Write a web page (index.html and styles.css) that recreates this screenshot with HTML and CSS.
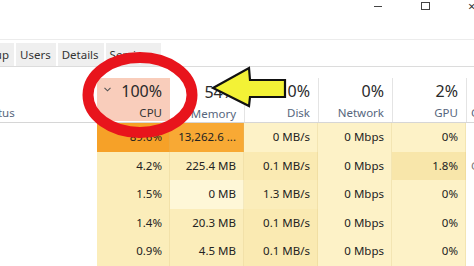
FILE: index.html
```html
<!DOCTYPE html>
<html>
<head>
  <meta charset="UTF-8"/>
  <title>Task Manager</title>
  <link rel="stylesheet" href="styles.css">
</head>
<body>
<div class="window">
  <div class="titlebar">
    <span class="ctl ctl-min"></span>
    <span class="ctl ctl-max"></span>
    <span class="ctl ctl-close">×</span>
  </div>

  <div class="tabs">
    <span class="tab tab-first">Startup</span>
    <span class="tab">Users</span>
    <span class="tab">Details</span>
    <span class="tab">Services</span>
  </div>

  <div class="table">
    <div class="head">
      <div class="hcell hcell-name"><span class="label status">Status</span></div>
      <div class="hcell sorted">
        <div class="hnum">
          <svg class="chev" width="7" height="5" viewBox="0 0 7 5"><polyline points="0.5,0.8 3.5,3.8 6.5,0.8" fill="none" stroke="#555" stroke-width="1.1"/></svg>
          <span>100%</span>
        </div>
        <span class="label">CPU</span>
      </div>
      <div class="hcell">
        <div class="hnum"><span>54%</span></div>
        <span class="label">Memory</span>
      </div>
      <div class="hcell sep">
        <div class="hnum"><span>0%</span></div>
        <span class="label">Disk</span>
      </div>
      <div class="hcell sep">
        <div class="hnum"><span>0%</span></div>
        <span class="label">Network</span>
      </div>
      <div class="hcell sep">
        <div class="hnum"><span>2%</span></div>
        <span class="label">GPU</span>
      </div>
      <div class="hcell sep hcell-extra"><span class="label">GPU engine</span></div>
    </div>

    <div class="row">
      <div class="cell name"></div>
      <div class="cell hot">89.6%</div>
      <div class="cell hot2">13,262.6 ...</div>
      <div class="cell pale">0 MB/s</div>
      <div class="cell pale">0 Mbps</div>
      <div class="cell pale">0%</div>
      <div class="cell extra"></div>
    </div>
    <div class="row">
      <div class="cell name"></div>
      <div class="cell mid">4.2%</div>
      <div class="cell mid">225.4 MB</div>
      <div class="cell mid2">0.1 MB/s</div>
      <div class="cell pale">0 Mbps</div>
      <div class="cell warm">1.8%</div>
      <div class="cell extra">GPU 0 - 3D</div>
    </div>
    <div class="row">
      <div class="cell name"></div>
      <div class="cell mid">1.5%</div>
      <div class="cell light">0 MB</div>
      <div class="cell mid">1.3 MB/s</div>
      <div class="cell pale">0 Mbps</div>
      <div class="cell pale">0%</div>
      <div class="cell extra"></div>
    </div>
    <div class="row">
      <div class="cell name"></div>
      <div class="cell mid">1.4%</div>
      <div class="cell mid">20.3 MB</div>
      <div class="cell mid2">0.1 MB/s</div>
      <div class="cell pale">0 Mbps</div>
      <div class="cell pale">0%</div>
      <div class="cell extra"></div>
    </div>
    <div class="row">
      <div class="cell name"></div>
      <div class="cell mid">0.9%</div>
      <div class="cell mid">4.5 MB</div>
      <div class="cell mid2">0.1 MB/s</div>
      <div class="cell pale">0 Mbps</div>
      <div class="cell pale">0%</div>
      <div class="cell extra"></div>
    </div>
  </div>

  <!-- annotation drawn over the screenshot -->
  <svg class="annot" width="474" height="266" viewBox="0 0 474 266">
    <ellipse cx="140" cy="95" rx="52" ry="37.5" fill="none" stroke="#e8141c" stroke-width="11"/>
    <polygon points="213,88 249,68 250,80 285,80 285,97 250,97 249,106" fill="#f3f236" stroke="#111" stroke-width="2.2" stroke-linejoin="miter"/>
  </svg>
</div>
</body>
</html>
```

FILE: styles.css
```css
html, body {
  margin: 0;
  padding: 0;
  background: #fff;
}
body {
  width: 474px;
  height: 266px;
  overflow: hidden;
  font-family: "Noto Sans", "Liberation Sans", sans-serif;
  color: #222;
}
.window {
  position: relative;
  width: 474px;
  height: 266px;
  overflow: hidden;
}

/* title bar */
.titlebar {
  height: 40px;
  border-bottom: 1px solid #ececec;
  box-sizing: border-box;
  display: flex;
  justify-content: flex-end;
  align-items: flex-start;
}
.ctl {
  display: block;
  color: #333;
}
.ctl-min {
  width: 8px;
  height: 1px;
  background: #444;
  margin-top: 6px;
  margin-right: 39px;
}
.ctl-max {
  width: 7px;
  height: 6px;
  border: 1px solid #444;
  margin-top: 2px;
  margin-right: 38px;
}
.ctl-close {
  font-size: 13px;
  line-height: 12px;
  width: 6px;
  overflow: hidden;
}

/* tabs */
.tabs {
  margin-top: 3px;
  height: 23px;
  display: flex;
  gap: 2px;
  border-bottom: 1px solid #dcdcdc;
  font-size: 11.5px;
  line-height: 23px;
}
.tab {
  background: #efefef;
  color: #333;
  padding: 0 5px 0 4px;
  white-space: nowrap;
}
.tab-first {
  margin-left: -35px;
}
.tab:last-child {
  padding-right: 8px;
}

/* table header */
.head, .row {
  display: grid;
  grid-template-columns: 97px 73px 74px 74px 74px 74px 1fr;
}
.head {
  height: 55px;
  border-bottom: 1px solid #d6d6d6;
  align-items: end;
}
.hcell {
  height: 43px;
  box-sizing: border-box;
  padding: 3px 8px 0 7px;
  display: flex;
  flex-direction: column;
  align-items: flex-end;
  gap: 4px;
}
.hcell.sep {
  border-left: 1px solid #e4e4e4;
  height: 44px;
}
.hcell.sorted {
  background: #f9cdbb;
  margin-bottom: 1px;
}
.hnum {
  align-self: stretch;
  display: flex;
  justify-content: flex-end;
  align-items: flex-start;
  font-size: 16px;
  line-height: 20px;
  color: #2a2a2a;
}
.sorted .hnum {
  justify-content: space-between;
}
.chev {
  margin-top: 6px;
}
.label {
  font-size: 11.5px;
  line-height: 16px;
  color: #56667d;
}
.sorted .label {
  color: #333;
}
.hcell-name {
  align-items: flex-start;
  justify-content: flex-end;
  padding: 0 0 1px 0;
}
.status {
  margin-left: -19px;
}
.hcell-extra {
  align-items: flex-start;
  justify-content: flex-end;
  padding: 0 0 1px 4px;
  white-space: nowrap;
}

/* rows */
.row {
  height: 28.5px;
}
.cell {
  font-size: 11.5px;
  line-height: 28.5px;
  text-align: right;
  padding-right: 7px;
  white-space: nowrap;
  border-right: 1px solid rgba(214, 190, 120, 0.25);
}
.cell.name {
  background: #fff;
  border-right: 0;
}
.cell.extra {
  border-right: 0;
  text-align: left;
  padding: 0 0 0 5px;
  color: #777;
}
.hot { background: #f6a128; }
.hot2 { background: #f8a934; }
.mid { background: #fbedba; }
.mid2 { background: #faeab2; }
.pale { background: #fdf2c7; }
.light { background: #fef7d7; }
.warm { background: #f8e6aa; }

/* annotation */
.annot {
  position: absolute;
  left: 0;
  top: 0;
  pointer-events: none;
}
```
